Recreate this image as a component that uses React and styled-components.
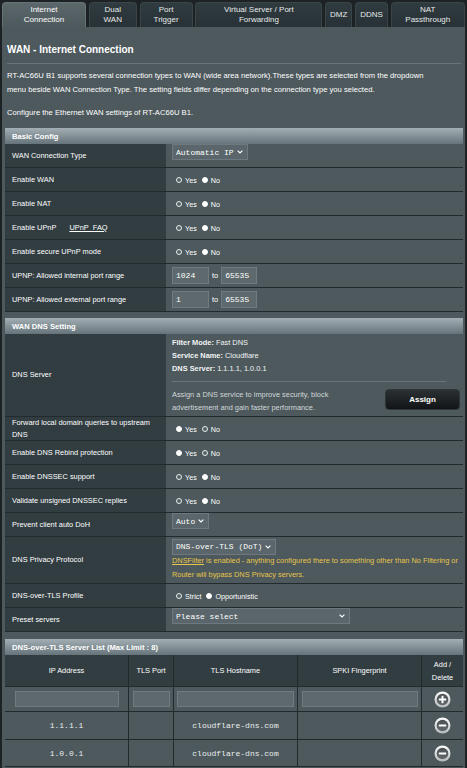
import React from 'react';
import styled, { createGlobalStyle } from 'styled-components';

const Global = createGlobalStyle`
  *, *::before, *::after { box-sizing: border-box; }
  html, body { margin: 0; padding: 0; background: #1d2225; }
  body { font-family: "Liberation Sans", Arial, sans-serif; color: #fff; }
`;

const Page = styled.div`
  width: 467px;
  padding-top: 2px;
  background: #1d2225;
`;

const TabBar = styled.nav`
  display: grid;
  grid-template-columns: 84px 48px 53px 127px 27px 33px 74px;
  column-gap: 2.8px;
  padding: 0 2px;
  height: 25px;
`;

const Tab = styled.div`
  display: flex;
  align-items: center;
  justify-content: center;
  text-align: center;
  font-size: 8px;
  line-height: 10px;
  color: ${p => (p.$active ? '#ffffff' : '#e6e9ea')};
  border-radius: 4px 4px 0 0;
  border: 1px solid ${p => (p.$active ? '#66727a' : '#3a4549')};
  border-bottom: none;
  background: ${p => (p.$active ? 'linear-gradient(#5b676b, #4d595d)' : 'linear-gradient(#303b3f, #283236)')};
`;

const Panel = styled.main`
  margin: 0 2px;
  background: #4d595d;
  padding: 15px 2px 30px 3px;
`;

const Title = styled.h1`
  margin: 0;
  padding: 0 2px;
  font-size: 10px;
  line-height: 16px;
  font-weight: bold;
`;

const Rule = styled.div`
  height: 1px;
  background: #687479;
  margin: 5px 2px 0;
`;

const Para = styled.p`
  margin: ${p => p.$mt}px 0 0;
  padding: 0 2px;
  font-size: 7.65px;
  line-height: 14px;
  white-space: nowrap;
`;

const FormTable = styled.section`
  margin-top: ${p => p.$mt}px;
  background: #323d42;
`;

const SectionHead = styled.div`
  height: 16px;
  display: flex;
  align-items: center;
  padding-left: 7px;
  font-size: 7.6px;
  font-weight: bold;
  background: linear-gradient(#a2aeb3 0%, #87949a 45%, #66737a 100%);
`;

const Row = styled.div`
  display: grid;
  grid-template-columns: 161px 1fr;
  height: ${p => p.$h || 24}px;
  border-bottom: 1px solid #222a2e;
`;

const Label = styled.div`
  display: flex;
  align-items: center;
  gap: 13px;
  padding: 0 7px;
  background: #323d42;
  font-size: 7.4px;
  line-height: 11.6px;
`;

const FaqLink = styled.a`
  color: #fff;
  text-decoration: underline;
  font-size: 7.4px;
`;

const Value = styled.div`
  display: flex;
  flex-direction: ${p => (p.$col ? 'column' : 'row')};
  align-items: ${p => (p.$col ? 'stretch' : 'center')};
  justify-content: ${p => (p.$col ? 'center' : 'flex-start')};
  padding: 0 ${p => p.$pr ?? 6}px 0 6px;
  background: #4d595d;
  font-size: 7.4px;
`;

const RadioDot = styled.span`
  display: inline-block;
  flex: none;
  width: 6px;
  height: 6px;
  border-radius: 50%;
  margin: 0 3px 0 ${p => (p.$first ? 4 : 5)}px;
  border: 1.3px solid ${p => (p.$on ? '#ffffff' : '#e8ebec')};
  background: ${p => (p.$on ? '#ffffff' : '#56626a')};
`;

const RadioText = styled.span`
  font-size: 7.2px;
  line-height: 8px;
  padding-top: 2px;
`;

const FakeSelect = styled.div`
  display: flex;
  align-items: center;
  justify-content: space-between;
  gap: 3px;
  width: ${p => (p.$w ? `${p.$w}px` : 'auto')};
  align-self: flex-start;
  height: 16px;
  padding: 0 4px 0 3px;
  background: #5a666b;
  border: 1px solid #6d797e;
  font-family: "Liberation Mono", "DejaVu Sans Mono", monospace;
  font-size: 8px;
  color: #fff;
`;

const Field = styled.input`
  width: ${p => p.$w}px;
  height: ${p => p.$hh || 17}px;
  padding: 0 0 0 ${p => p.$pl ?? 3}px;
  margin: 0;
  background: #5d696d;
  border: 1px solid #6f7b80;
  color: #fff;
  font-family: "Liberation Mono", "DejaVu Sans Mono", monospace;
  font-size: 8px;
  outline: none;
`;

const To = styled.span`
  margin: 0 3px;
  font-size: 7.4px;
`;

const InfoLine = styled.div`
  line-height: 13.3px;
  color: #f2f4f5;
  b { font-weight: bold; }
`;

const InfoRule = styled.div`
  height: 1px;
  background: #68747a;
  margin: 6px 14px 0 0;
`;

const AssignRow = styled.div`
  display: flex;
  justify-content: space-between;
  align-items: flex-start;
  margin-top: 5.5px;
`;

const Hint = styled.div`
  line-height: 13.3px;
  color: #d3d8da;
`;

const AssignButton = styled.button`
  width: 75px;
  height: 21px;
  margin-top: 1px;
  border-radius: 4px;
  border: 1px solid #2f3538;
  background: linear-gradient(#2b3033, #121517);
  color: #fff;
  font-family: "Liberation Sans", Arial, sans-serif;
  font-weight: bold;
  font-size: 8px;
`;

const Warn = styled.div`
  margin-top: -1px;
  line-height: 14px;
  color: #e7c54b;
  white-space: nowrap;
  a { color: #e7c54b; text-decoration: underline; }
`;

const ServerGrid = styled.div`
  display: grid;
  grid-template-columns: 124px 45px 124px 124px 1fr;
`;

const Cell = styled.div`
  display: flex;
  align-items: center;
  justify-content: center;
  text-align: center;
  height: ${p => p.$h}px;
  background: ${p => (p.$dark ? '#323d42' : '#4d595d')};
  border-right: ${p => (p.$last ? 'none' : '1px solid #222a2e')};
  border-bottom: 1px solid #222a2e;
  font-size: ${p => (p.$mono ? 8 : 7.4)}px;
  font-family: ${p => (p.$mono ? '"Liberation Mono", "DejaVu Sans Mono", monospace' : 'inherit')};
  line-height: 13px;
  color: ${p => (p.$mono ? '#eceeef' : '#ffffff')};
`;

const Chevron = () => (
  <svg width="6" height="4" viewBox="0 0 6 4">
    <polyline points="0.6,0.6 3,3 5.4,0.6" fill="none" stroke="#fff" strokeWidth="1.1" />
  </svg>
);

const RoundIcon = ({ minus }) => (
  <svg width="17" height="17" viewBox="0 0 17 17">
    <defs>
      <linearGradient id="ringGrad" x1="0" y1="0" x2="0" y2="1">
        <stop offset="0" stopColor="#ffffff" />
        <stop offset="1" stopColor="#b5babc" />
      </linearGradient>
      <linearGradient id="coreGrad" x1="0" y1="0" x2="0" y2="1">
        <stop offset="0" stopColor="#4a5053" />
        <stop offset="1" stopColor="#62686b" />
      </linearGradient>
    </defs>
    <circle cx="8.5" cy="8.5" r="8" fill="url(#ringGrad)" />
    <circle cx="8.5" cy="8.5" r="5.8" fill="url(#coreGrad)" />
    <path d="M4.8 8.5h7.4" stroke="#fff" strokeWidth="2" />
    {!minus && <path d="M8.5 4.8v7.4" stroke="#fff" strokeWidth="2" />}
  </svg>
);

const Radios = ({ options, on }) => (
  <>
    {options.map((o, i) => (
      <React.Fragment key={o}>
        <RadioDot $first={i === 0} $on={on === i} />
        <RadioText>{o}</RadioText>
      </React.Fragment>
    ))}
  </>
);

const Select = ({ children, w }) => (
  <FakeSelect $w={w}>
    <span>{children}</span>
    <Chevron />
  </FakeSelect>
);

const tabs = [
  ['Internet', 'Connection'],
  ['Dual', 'WAN'],
  ['Port', 'Trigger'],
  ['Virtual Server / Port', 'Forwarding'],
  ['DMZ'],
  ['DDNS'],
  ['NAT', 'Passthrough'],
];

const YN = ['Yes', 'No'];

export default function App() {
  return (
    <Page>
      <Global />
      <TabBar>
        {tabs.map((t, i) => (
          <Tab key={i} $active={i === 0}>
            <span>
              {t[0]}
              {t[1] && <br />}
              {t[1]}
            </span>
          </Tab>
        ))}
      </TabBar>
      <Panel>
        <Title>WAN - Internet Connection</Title>
        <Rule />
        <Para $mt={5}>
          RT-AC66U B1 supports several connection types to WAN (wide area network).These types are selected from the dropdown
          <br />
          menu beside WAN Connection Type. The setting fields differ depending on the connection type you selected.
        </Para>
        <Para $mt={9}>Configure the Ethernet WAN settings of RT-AC66U B1.</Para>

        <FormTable $mt={8}>
          <SectionHead>Basic Config</SectionHead>
          <Row>
            <Label>WAN Connection Type</Label>
            <Value><Select>Automatic IP</Select></Value>
          </Row>
          <Row>
            <Label>Enable WAN</Label>
            <Value><Radios options={YN} on={1} /></Value>
          </Row>
          <Row>
            <Label>Enable NAT</Label>
            <Value><Radios options={YN} on={1} /></Value>
          </Row>
          <Row>
            <Label>
              <span>Enable UPnP</span>
              <FaqLink>UPnP&nbsp;&nbsp;FAQ</FaqLink>
            </Label>
            <Value><Radios options={YN} on={1} /></Value>
          </Row>
          <Row>
            <Label>Enable secure UPnP mode</Label>
            <Value><Radios options={YN} on={1} /></Value>
          </Row>
          <Row>
            <Label>UPNP: Allowed internal port range</Label>
            <Value>
              <Field $w={37} defaultValue="1024" />
              <To>to</To>
              <Field $w={36} defaultValue="65535" />
            </Value>
          </Row>
          <Row>
            <Label>UPNP: Allowed external port range</Label>
            <Value>
              <Field $w={37} defaultValue="1" />
              <To>to</To>
              <Field $w={36} defaultValue="65535" />
            </Value>
          </Row>
        </FormTable>

        <FormTable $mt={6}>
          <SectionHead>WAN DNS Setting</SectionHead>
          <Row $h={83}>
            <Label>DNS Server</Label>
            <Value $col $pr={3}>
              <InfoLine><b>Filter Mode:</b> Fast DNS</InfoLine>
              <InfoLine><b>Service Name:</b> Cloudflare</InfoLine>
              <InfoLine><b>DNS Server:</b> 1.1.1.1, 1.0.0.1</InfoLine>
              <InfoRule />
              <AssignRow>
                <Hint>
                  Assign a DNS service to improve security, block
                  <br />
                  advertisement and gain faster performance.
                </Hint>
                <AssignButton>Assign</AssignButton>
              </AssignRow>
            </Value>
          </Row>
          <Row>
            <Label>
              <span>Forward local domain queries to upstream<br />DNS</span>
            </Label>
            <Value><Radios options={YN} on={0} /></Value>
          </Row>
          <Row>
            <Label>Enable DNS Rebind protection</Label>
            <Value><Radios options={YN} on={0} /></Value>
          </Row>
          <Row>
            <Label>Enable DNSSEC support</Label>
            <Value><Radios options={YN} on={1} /></Value>
          </Row>
          <Row>
            <Label>Validate unsigned DNSSEC replies</Label>
            <Value><Radios options={YN} on={1} /></Value>
          </Row>
          <Row>
            <Label>Prevent client auto DoH</Label>
            <Value><Select>Auto</Select></Value>
          </Row>
          <Row $h={47}>
            <Label>DNS Privacy Protocol</Label>
            <Value $col $pr={2}>
              <Select>DNS-over-TLS (DoT)</Select>
              <Warn>
                <a>DNSFilter</a> is enabled - anything configured there to something other than No Filtering or
                <br />
                Router will bypass DNS Privacy servers.
              </Warn>
            </Value>
          </Row>
          <Row>
            <Label>DNS-over-TLS Profile</Label>
            <Value><Radios options={['Strict', 'Opportunistic']} on={1} /></Value>
          </Row>
          <Row>
            <Label>Preset servers</Label>
            <Value><Select w={178}>Please select</Select></Value>
          </Row>
        </FormTable>

        <FormTable $mt={7}>
          <SectionHead>DNS-over-TLS Server List (Max Limit : 8)</SectionHead>
          <ServerGrid>
            <Cell $dark $h={32}>IP Address</Cell>
            <Cell $dark $h={32}>TLS Port</Cell>
            <Cell $dark $h={32}>TLS Hostname</Cell>
            <Cell $dark $h={32}>SPKI Fingerprint</Cell>
            <Cell $dark $last $h={32}>Add /<br />Delete</Cell>

            <Cell $h={25}><Field $w={104} $hh={16} /></Cell>
            <Cell $h={25}><Field $w={37} $hh={16} /></Cell>
            <Cell $h={25}><Field $w={117} $hh={16} /></Cell>
            <Cell $h={25}><Field $w={116} $hh={16} /></Cell>
            <Cell $last $h={25}><RoundIcon /></Cell>

            <Cell $mono $h={28}>1.1.1.1</Cell>
            <Cell $mono $h={28}></Cell>
            <Cell $mono $h={28}>cloudflare-dns.com</Cell>
            <Cell $mono $h={28}></Cell>
            <Cell $last $h={28}><RoundIcon minus /></Cell>

            <Cell $mono $h={27}>1.0.0.1</Cell>
            <Cell $mono $h={27}></Cell>
            <Cell $mono $h={27}>cloudflare-dns.com</Cell>
            <Cell $mono $h={27}></Cell>
            <Cell $last $h={27}><RoundIcon minus /></Cell>
          </ServerGrid>
        </FormTable>
      </Panel>
    </Page>
  );
}
